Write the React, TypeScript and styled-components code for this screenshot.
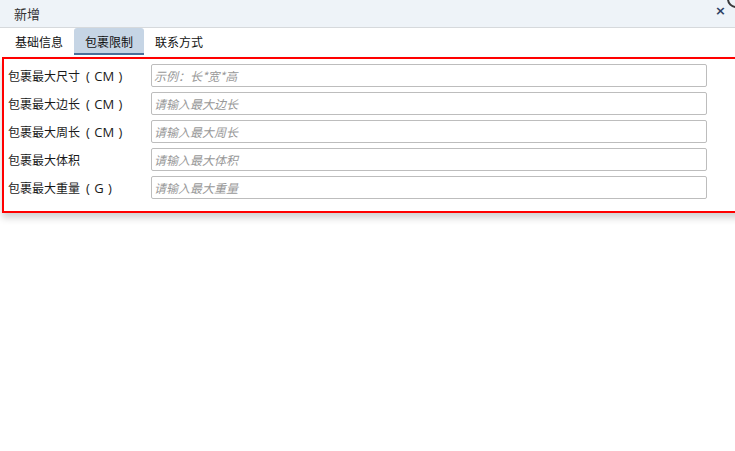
import React from 'react';
import styled, { createGlobalStyle } from 'styled-components';

const GlobalStyle = createGlobalStyle`
  html, body {
    margin: 0;
    padding: 0;
    background: #ffffff;
    overflow: hidden;
  }
  body {
    font-family: "Noto Sans CJK SC", "Noto Sans", "DejaVu Sans", sans-serif;
    font-size: 12px;
    color: #222;
  }
`;

const Dialog = styled.div`
  position: relative;
  width: 735px;
  height: 451px;
  overflow: hidden;
  background: #fff;
`;

const TitleBar = styled.div`
  height: 27px;
  display: flex;
  align-items: center;
  justify-content: space-between;
  padding: 0 9px 0 14px;
  background: #eef3f8;
  border-bottom: 1px solid #d6d9dc;
`;

const Title = styled.span`
  font-size: 13px;
  color: #333;
  line-height: 1;
  margin-top: -1px;
`;

const Close = styled.span`
  font-family: "DejaVu Sans", sans-serif;
  font-size: 13px;
  font-weight: bold;
  color: #2c3f63;
  line-height: 1;
  margin-top: -6px;
  cursor: pointer;
`;

const CornerRing = styled.span`
  position: absolute;
  top: -10px;
  right: -10px;
  width: 14px;
  height: 14px;
  border: 2px solid #3a3a3a;
  border-radius: 50%;
`;

const TabBar = styled.div`
  display: flex;
  height: 27px;
  padding-left: 4px;
`;

const Tab = styled.div<{ $active?: boolean }>`
  padding: 2px 11px 0;
  display: flex;
  align-items: center;
  font-size: 12px;
  color: #111;
  border-radius: 3px 3px 0 0;
  box-sizing: border-box;
  background: ${p => (p.$active ? '#c6d5e5' : 'transparent')};
  border-bottom: 2px solid ${p => (p.$active ? '#4a6f9a' : 'transparent')};
  cursor: pointer;
`;

const Form = styled.div`
  margin: 2px 0 0 2px;
  width: 760px;
  border: 2px solid #ff0000;
  padding: 5px 0 12px 4px;
  display: flex;
  flex-direction: column;
  gap: 5px;
  box-shadow: 0 5px 7px rgba(0, 0, 0, 0.18);
`;

const Row = styled.div`
  display: flex;
  align-items: center;
  height: 23px;
`;

const Label = styled.label`
  width: 143px;
  font-size: 12px;
  color: #1a1a1a;
  white-space: nowrap;
`;

const Unit = styled.span`
  font-family: "Open Sans", "Noto Sans", sans-serif;
  font-size: 13px;
  padding-left: 6px;
  word-spacing: 1px;
`;

const Input = styled.input`
  width: 556px;
  height: 23px;
  box-sizing: border-box;
  border: 1px solid #bdbdbd;
  border-radius: 2px;
  padding: 0 2px;
  font-family: "Noto Sans CJK SC", "Noto Sans", sans-serif;
  font-size: 12px;
  outline: none;
  &::placeholder {
    color: #999999;
    font-style: italic;
  }
`;

const fields = [
  { label: '包裹最大尺寸', unit: 'CM', placeholder: '示例：长*宽*高' },
  { label: '包裹最大边长', unit: 'CM', placeholder: '请输入最大边长' },
  { label: '包裹最大周长', unit: 'CM', placeholder: '请输入最大周长' },
  { label: '包裹最大体积', unit: '', placeholder: '请输入最大体积' },
  { label: '包裹最大重量', unit: 'G', placeholder: '请输入最大重量' },
];

const App: React.FC = () => {
  return (
    <>
      <GlobalStyle />
      <Dialog>
        <TitleBar>
          <Title>新增</Title>
          <Close>×</Close>
        </TitleBar>
        <CornerRing />
        <TabBar>
          <Tab>基础信息</Tab>
          <Tab $active>包裹限制</Tab>
          <Tab>联系方式</Tab>
        </TabBar>
        <Form>
          {fields.map(f => (
            <Row key={f.label}>
              <Label>
                {f.label}
                {f.unit && <Unit>( {f.unit} )</Unit>}
              </Label>
              <Input placeholder={f.placeholder} />
            </Row>
          ))}
        </Form>
      </Dialog>
    </>
  );
};

export default App;
